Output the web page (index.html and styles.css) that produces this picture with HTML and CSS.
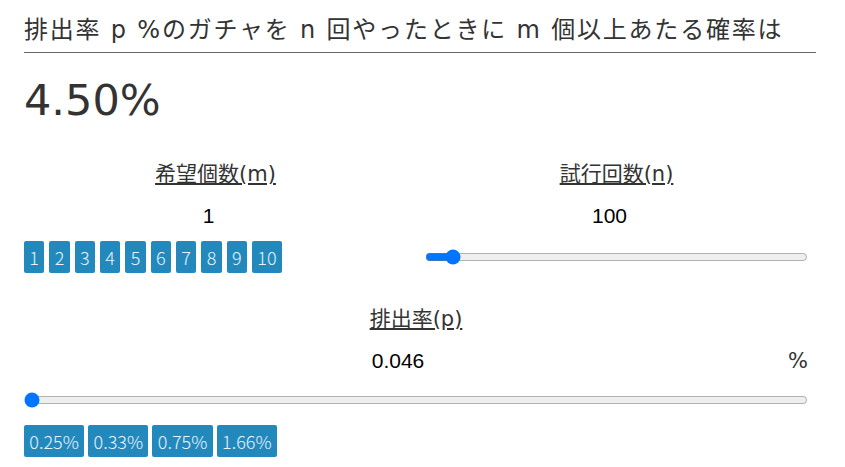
FILE: index.html
```html
<!DOCTYPE html>
<html lang="ja">
<head>
<meta charset="utf-8">
<title>ガチャ確率</title>
<link rel="stylesheet" href="styles.css">
</head>
<body>
<main class="page">
  <h1 class="title">排出率 p %のガチャを n 回やったときに m 個以上あたる確率は</h1>
  <div class="result">4.50%</div>

  <div class="grid">
    <section class="field">
      <div class="label"><u>希望個数(m)</u></div>
      <div class="value">1</div>
      <div class="control">
        <div class="btns btns-count">
          <button class="btn">1</button>
          <button class="btn">2</button>
          <button class="btn">3</button>
          <button class="btn">4</button>
          <button class="btn">5</button>
          <button class="btn">6</button>
          <button class="btn">7</button>
          <button class="btn">8</button>
          <button class="btn">9</button>
          <button class="btn">10</button>
        </div>
      </div>
    </section>
    <section class="field">
      <div class="label"><u>試行回数(n)</u></div>
      <div class="value">100</div>
      <div class="control">
        <input class="range" type="range" min="0" max="1000" value="54">
      </div>
    </section>
  </div>

  <section class="field wide">
    <div class="label"><u>排出率(p)</u></div>
    <div class="value-row">
      <div class="value">0.046</div>
      <span class="unit">%</span>
    </div>
    <div class="slider-row">
      <input class="range" type="range" min="0" max="100" value="0">
    </div>
    <div class="btns btns-rate">
      <button class="btn">0.25%</button>
      <button class="btn">0.33%</button>
      <button class="btn">0.75%</button>
      <button class="btn">1.66%</button>
    </div>
  </section>
</main>
</body>
</html>
```

FILE: styles.css
```css
* { box-sizing: border-box; }

html, body {
  margin: 0;
  padding: 0;
  background: #fff;
}

body {
  font-family: "DejaVu Sans", "Noto Sans CJK JP", sans-serif;
  color: #333;
}

.page {
  width: 792px;
  margin-left: 24px;
}

.title {
  margin: 14px 0 0;
  padding-bottom: 6px;
  font-size: 24px;
  line-height: 32px;
  letter-spacing: 1.8px;
  font-weight: normal;
  border-bottom: 1px solid #666;
  white-space: nowrap;
}

.result {
  margin-top: 22px;
  font-size: 43px;
  line-height: 50px;
  color: #333;
}

.grid {
  width: 784px;
  margin-top: 35px;
  display: grid;
  grid-template-columns: 1fr 1fr;
  column-gap: 18px;
}

.field {
  display: flex;
  flex-direction: column;
}

.label {
  text-align: center;
  font-size: 21px;
  line-height: 28px;
}

.label u {
  text-decoration-thickness: 2px;
  text-underline-offset: 2px;
}

.value {
  margin-top: 14px;
  padding-right: 14px;
  text-align: center;
  font-family: "Liberation Sans", Arial, sans-serif;
  font-size: 21px;
  line-height: 28px;
  color: #000;
}

.control {
  margin-top: 11px;
  height: 32px;
  display: flex;
  align-items: center;
}

.btns {
  display: flex;
  gap: 4px;
}

.btns-count {
  gap: 5px;
}

.btn {
  margin: 0;
  border: none;
  border-radius: 2px;
  height: 32px;
  padding: 0 5.35px;
  background: #2389bd;
  color: #e6f4ff;
  font-family: "Noto Sans CJK JP", sans-serif;
  font-weight: 300;
  font-size: 18px;
  line-height: 32px;
}

.range {
  width: 100%;
  margin: 0;
}

.wide {
  width: 784px;
  margin-top: 32px;
}

.value-row {
  display: flex;
  align-items: baseline;
}

.value-row .value {
  flex: 1;
  margin-top: 14px;
}

.unit {
  width: 22px;
  text-align: right;
  font-size: 21px;
  line-height: 28px;
  color: #333;
}

.slider-row {
  margin-top: 13px;
  height: 24px;
  display: flex;
  align-items: center;
}

.btns-rate {
  margin-top: 13px;
}
```
